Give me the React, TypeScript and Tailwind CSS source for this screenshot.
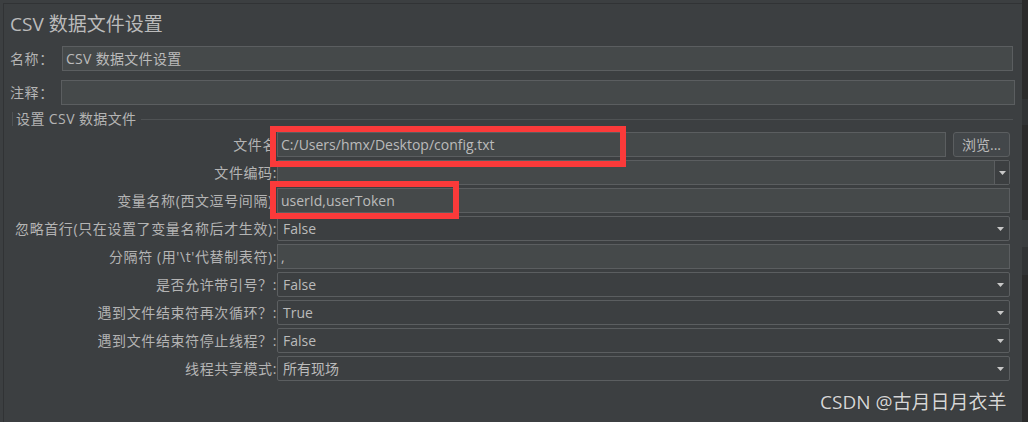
import React from "react";

const font = { fontFamily: '"Open Sans", "Noto Sans CJK SC", sans-serif' };

function Arrow() {
  return (
    <svg width="7" height="4" viewBox="0 0 7 4" className="shrink-0">
      <path d="M0 0 H7 L3.5 4 Z" fill="#c8c8c8" />
    </svg>
  );
}

function Label({ text }: { text: string }) {
  return (
    <div className="w-[273px] shrink-0 text-right text-[14px] tracking-[0.6px] text-[#b4b4b4] leading-[25px] whitespace-nowrap">
      {text}
    </div>
  );
}

function TextField({ value = "" }: { value?: string }) {
  return (
    <div className="flex-1 h-[25px] bg-[#45494a] border border-[#5b5e60] px-[3px] text-[14px] leading-[23px] text-[#bbbbbb] whitespace-nowrap overflow-hidden">
      {value}
    </div>
  );
}

function Combo({ value }: { value: string }) {
  return (
    <div className="flex-1 h-[25px] bg-[#3c3f41] border border-[#5b5e60] rounded-[2px] flex items-center justify-between pl-[5px] pr-[5px]">
      <span className="text-[14px] leading-[23px] text-[#bbbbbb] whitespace-nowrap">{value}</span>
      <Arrow />
    </div>
  );
}

function Row({ label, children }: { label: string; children: React.ReactNode }) {
  return (
    <div className="flex items-center h-[25px]">
      <Label text={label} />
      <div className="flex-1 flex items-center">{children}</div>
    </div>
  );
}

export default function App() {
  return (
    <div className="relative w-[1028px] h-[422px] bg-[#3c3f41] flex overflow-hidden" style={font}>
      {/* main panel */}
      <div className="flex-1 pt-[3px] pl-[3px]">
        <div className="h-full border-t border-l border-[#313335] pl-[6px] pr-[12px]">
          <h1 className="text-[19px] leading-[24px] text-[#bbbbbb] mt-[8px]">CSV 数据文件设置</h1>

          <div className="flex items-center mt-[10px] h-[25px]">
            <span className="w-[52px] shrink-0 text-[14px] tracking-[0.6px] text-[#b4b4b4]">名称：</span>
            <div className="flex-1 h-[25px] bg-[#45494a] border border-[#5b5e60] px-[3px] text-[14px] tracking-[0.3px] leading-[23px] text-[#bbbbbb] mr-[-3px]">
              CSV 数据文件设置
            </div>
          </div>

          <div className="flex items-center mt-[9px] h-[25px]">
            <span className="w-[51px] shrink-0 text-[14px] tracking-[0.6px] text-[#b4b4b4]">注释：</span>
            <div className="flex-1 h-[25px] bg-[#45494a] border border-[#5b5e60] mr-[-5px]" />
          </div>

          {/* titled border */}
          <div className="flex items-center mt-[7px] h-[14px] mr-[-3px]">
            <span className="w-[3px] self-stretch border-l border-[#4f5254] ml-[2px]" />
            <span className="text-[14px] leading-[14px] tracking-[0.4px] text-[#b4b4b4] ml-[1px] mr-[4px] whitespace-nowrap">设置 CSV 数据文件</span>
            <span className="flex-1 h-px bg-[#4f5254]" />
          </div>

          <div className="flex flex-col gap-[3px] mt-[6px] ml-[-6px]">
            <Row label="文件名">
              <TextField value="C:/Users/hmx/Desktop/config.txt" />
              <button className="ml-[7px] w-[57px] h-[25px] bg-[#43474a] border border-[#5b5e60] rounded-[3px] text-[14px] text-[#bbbbbb] leading-[23px]">
                浏览...
              </button>
            </Row>
            <Row label="文件编码:">
              <div className="flex-1 h-[25px] bg-[#45494a] border border-[#5b5e60] rounded-[2px] flex">
                <div className="flex-1" />
                <div className="w-[15px] border-l border-[#5b5e60] bg-[#3c3f41] flex items-center justify-center">
                  <Arrow />
                </div>
              </div>
            </Row>
            <Row label="变量名称(西文逗号间隔):">
              <TextField value="userId,userToken" />
            </Row>
            <Row label="忽略首行(只在设置了变量名称后才生效):">
              <Combo value="False" />
            </Row>
            <Row label="分隔符 (用'\t'代替制表符):">
              <TextField value="," />
            </Row>
            <Row label="是否允许带引号？:">
              <Combo value="False" />
            </Row>
            <Row label="遇到文件结束符再次循环？:">
              <Combo value="True" />
            </Row>
            <Row label="遇到文件结束符停止线程？:">
              <Combo value="False" />
            </Row>
            <Row label="线程共享模式:">
              <Combo value="所有现场" />
            </Row>
          </div>
        </div>
      </div>

      {/* neighbouring scrollbar strip */}
      <div className="w-[6px] shrink-0 flex flex-col bg-[#2b2b2b]">
        <div className="h-[99px]" />
        <div className="h-[26px] bg-[#313335]" />
        <div className="h-[95px]" />
        <div className="h-[27px] bg-[#3a3d3f]" />
        <div className="h-[28px] bg-[#313335]" />
      </div>

      {/* annotation boxes */}
      <div className="absolute left-[270px] top-[126px] w-[356px] h-[41px] border-[6px] border-[#fb3a3a]" />
      <div className="absolute left-[270px] top-[181px] w-[189px] h-[38px] border-[6px] border-[#fb3a3a]" />

      {/* watermark */}
      <div className="absolute left-[820px] top-[389px] text-[19px] leading-[26px] text-[#d6d6d6] whitespace-nowrap [text-shadow:0_0_1px_#2a2a2a]">
        CSDN @古月日月衣羊
      </div>
    </div>
  );
}
